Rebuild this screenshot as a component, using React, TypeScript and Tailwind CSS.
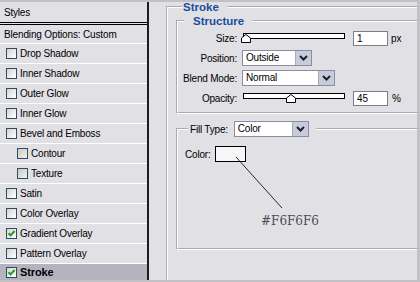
import React from "react";

type Item = { label: string; nested?: boolean; checked?: boolean; selected?: boolean };

const items: Item[] = [
  { label: "Drop Shadow" },
  { label: "Inner Shadow" },
  { label: "Outer Glow" },
  { label: "Inner Glow" },
  { label: "Bevel and Emboss" },
  { label: "Contour", nested: true },
  { label: "Texture", nested: true },
  { label: "Satin" },
  { label: "Color Overlay" },
  { label: "Gradient Overlay", checked: true },
  { label: "Pattern Overlay" },
  { label: "Stroke", checked: true, selected: true },
];

function Check({ checked, nested }: { checked?: boolean; nested?: boolean }) {
  return (
    <span
      className={
        "w-[11px] h-[11px] shrink-0 border border-[#2d4a66] flex items-center justify-center bg-linear-to-br " +
        (nested ? "from-[#c9c9c4] to-[#f2f2ee]" : "from-[#d6d6d0] to-white")
      }
    >
      {checked && (
        <svg width="9" height="9" viewBox="0 0 9 9">
          <path d="M1.5 4.2 L3.6 6.4 L7.6 2" stroke="#1f9e1f" strokeWidth="2" fill="none" />
        </svg>
      )}
    </span>
  );
}

function Chevron() {
  return (
    <span className="w-[16px] h-full shrink-0 bg-[#c8cbdc] border-l border-[#a7abc0] flex items-center justify-center">
      <svg width="9" height="6" viewBox="0 0 9 6">
        <polyline points="1,1 4.5,4.5 8,1" stroke="#1e1e28" strokeWidth="2" fill="none" />
      </svg>
    </span>
  );
}

function Select({ value, className }: { value: string; className: string }) {
  return (
    <div className={"flex h-[16px] border border-[#8c8c9c] bg-white " + className}>
      <span className="flex-1 pl-[3px] leading-[14px] text-[10px] tracking-[-0.2px] text-black">{value}</span>
      <Chevron />
    </div>
  );
}

function Slider({ thumb }: { thumb: number }) {
  return (
    <div className="relative w-[102px] h-[10px]">
      <div className="w-full h-[6px] border border-black bg-white" />
      <svg
        className="absolute top-[1px]"
        style={{ left: thumb }}
        width="10"
        height="9"
        viewBox="0 0 10 9"
      >
        <polygon points="0.5,8.5 0.5,4 5,0.5 9.5,4 9.5,8.5" fill="white" stroke="black" strokeWidth="1" />
      </svg>
    </div>
  );
}

function NumBox({ value }: { value: string }) {
  return (
    <div className="w-[35px] h-[15px] border border-[#7c7c8a] bg-white pl-[3px] text-[10px] leading-[13px] text-black">
      {value}
    </div>
  );
}

function Label({ children }: { children: React.ReactNode }) {
  return <span className="w-[59px] shrink-0 text-right text-[10px] tracking-[-0.2px] text-black">{children}</span>;
}

export default function App() {
  return (
    <div className="relative w-[420px] h-[282px] flex overflow-hidden border-t-2 border-r-[3px] border-b-2 border-[#c2c2c6] bg-[#e0e0e5] font-['Liberation_Sans',Arial,sans-serif] text-black">
      {/* Sidebar */}
      <div className="w-[149px] shrink-0 flex flex-col border-r-2 border-[#1c1c1c] bg-[#e0e0e5]">
        <div className="h-[23px] shrink-0 border-b-[3px] border-double border-black pl-[4px] flex items-center text-[10px] tracking-[-0.2px]">
          Styles
        </div>
        <div className="h-[19px] shrink-0 border-b border-white pl-[4px] flex items-center text-[10px] tracking-[-0.15px]">
          Blending Options: Custom
        </div>
        {items.map((it) => (
          <div
            key={it.label}
            className={
              "flex items-center gap-[3px] " +
              (it.nested ? "pl-[17px] " : "pl-[6px] ") +
              (it.selected
                ? "flex-1 bg-[#b4b4be] font-bold text-[11px] tracking-[-0.1px]"
                : "h-[20px] shrink-0 border-b border-white text-[10px] tracking-[-0.2px]")
            }
          >
            <Check checked={it.checked} nested={it.nested} />
            <span>{it.label}</span>
          </div>
        ))}
      </div>

      {/* Main panel */}
      <div className="flex-1 overflow-hidden pl-[17px]">
        <fieldset className="mt-[-1px] w-[290px] h-[300px] border-2 border-white [border-style:groove]">
          <legend className="ml-[14px] pl-[1px] pr-[8px] text-[11.5px] leading-[12px] font-bold text-[#1d4c9c]">
            Stroke
          </legend>

          <fieldset className="mt-[2px] ml-[8px] w-[270px] border-2 border-white [border-style:groove] pb-[4px]">
            <legend className="ml-[6px] pl-[9px] pr-[8px] text-[11.5px] leading-[12px] font-bold text-[#1d4c9c]">
              Structure
            </legend>
            <div className="pt-[1px] flex flex-col">
              <div className="h-[20px] flex items-center">
                <Label>Size:</Label>
                <div className="ml-[6px]">
                  <Slider thumb={-2} />
                </div>
                <div className="ml-[8px]">
                  <NumBox value="1" />
                </div>
                <span className="ml-[3px] text-[10px]">px</span>
              </div>
              <div className="h-[20px] flex items-center">
                <Label>Position:</Label>
                <Select value="Outside" className="ml-[5px] w-[70px]" />
              </div>
              <div className="h-[20px] flex items-center">
                <Label>Blend Mode:</Label>
                <Select value="Normal" className="ml-[5px] w-[93px]" />
              </div>
              <div className="h-[20px] flex items-center">
                <Label>Opacity:</Label>
                <div className="ml-[6px]">
                  <Slider thumb={43} />
                </div>
                <div className="ml-[8px]">
                  <NumBox value="45" />
                </div>
                <span className="ml-[4px] text-[10px]">%</span>
              </div>
            </div>
          </fieldset>

          <fieldset className="mt-[7px] ml-[8px] w-[270px] h-[129px] border-2 border-white [border-style:groove]">
            <legend className="ml-[10px] pl-[2px] pr-[7px]">
              <div className="flex items-center h-[16px]">
                <span className="text-[10px] tracking-[-0.2px]">Fill Type:</span>
                <Select value="Color" className="ml-[6px] w-[75px]" />
              </div>
            </legend>
            <div className="mt-[9px] pl-[7px] flex items-center gap-[4px]">
              <span className="w-[26px] text-[10px] tracking-[-0.2px]">Color:</span>
              <div className="w-[31px] h-[16px] border border-black bg-[#f6f6f6]" />
            </div>
          </fieldset>
        </fieldset>
      </div>

      {/* Annotation overlay */}
      <svg className="absolute left-0 top-[-2px] pointer-events-none" width="420" height="282">
        <line x1="236" y1="157" x2="282" y2="208" stroke="#2a2a2a" strokeWidth="1" />
      </svg>
      <span className="absolute left-[261px] top-[211px] text-[12px] leading-[16px] text-[#4c4c54] font-['DejaVu_Serif',serif]">
        #F6F6F6
      </span>
    </div>
  );
}
